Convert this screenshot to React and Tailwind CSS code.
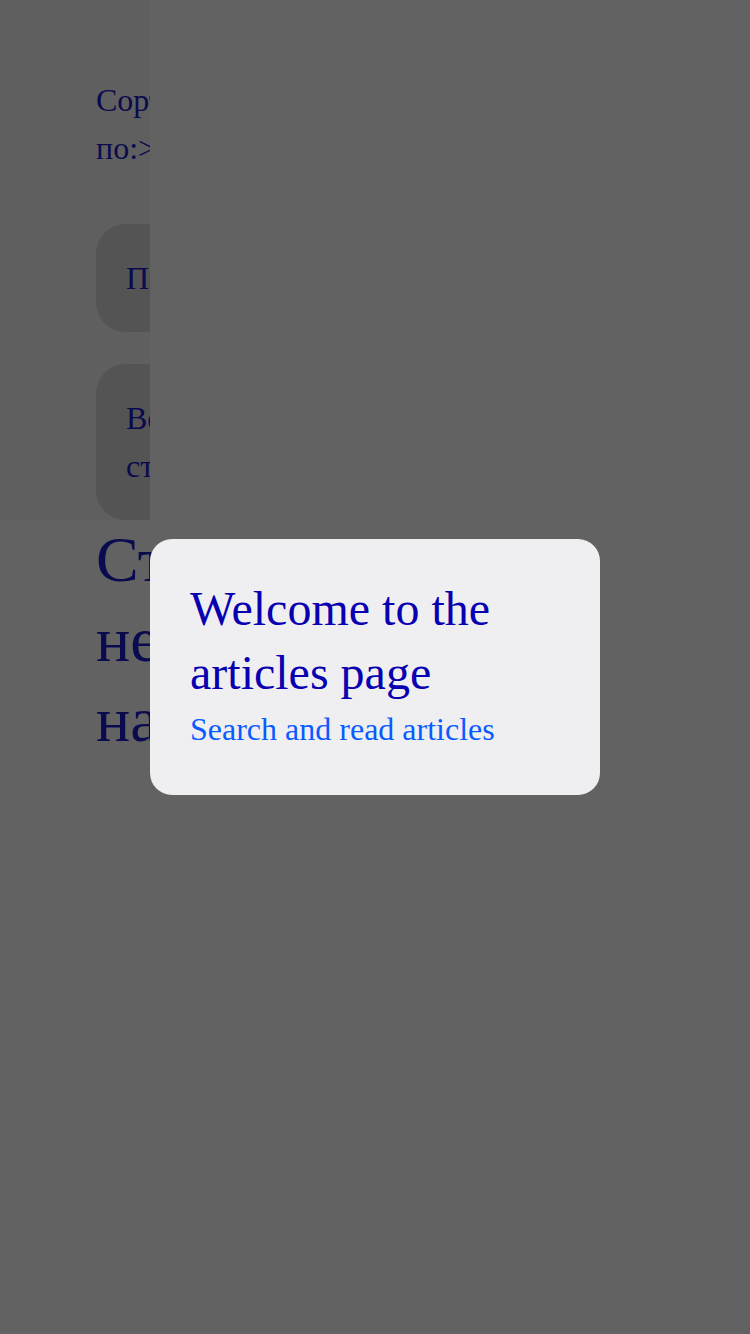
import React from "react";

const serif = { fontFamily: '"Liberation Serif", "Times New Roman", serif' };

const Card = ({ children }) => (
  <div className="w-[150px] rounded-[30px] bg-[#545454] px-[30px] py-[30px] text-[32px] leading-[48px] text-[#0a0a4e] whitespace-nowrap">
    {children}
  </div>
);

const App = () => {
  return (
    <div className="min-h-screen w-full bg-[#626262] relative" style={serif}>
      <div className="w-[150px] overflow-hidden bg-[#5f5f5f]">
        <div className="pl-24 pt-[76px] flex flex-col">
          <div className="text-[32px] leading-[48px] text-[#0a0a4e] whitespace-nowrap">
            <div>Сортировать</div>
            <div>по:&gt;</div>
          </div>
          <div className="mt-[52px] flex flex-col gap-8">
            <Card>
              <div>Популярные</div>
            </Card>
            <Card>
              <div>Веселые</div>
              <div>статьи</div>
            </Card>
          </div>
        </div>
      </div>
      <div className="pl-24 text-[64px] leading-[80px] text-[#0a0a4e]">
        <div>Статьи</div>
        <div>не</div>
        <div>найдены</div>
      </div>

      <div className="fixed inset-0 flex items-center justify-center">
        <div className="w-[450px] rounded-[22px] bg-[#efeff2] px-10 pt-[38px] pb-[42px]">
          <div className="text-[48px] leading-[64px] text-[#0800b0]">
            Welcome to the articles page
          </div>
          <div className="text-[32px] leading-[48px] text-[#0a5bff]">
            Search and read articles
          </div>
        </div>
      </div>
    </div>
  );
};

export default App;
